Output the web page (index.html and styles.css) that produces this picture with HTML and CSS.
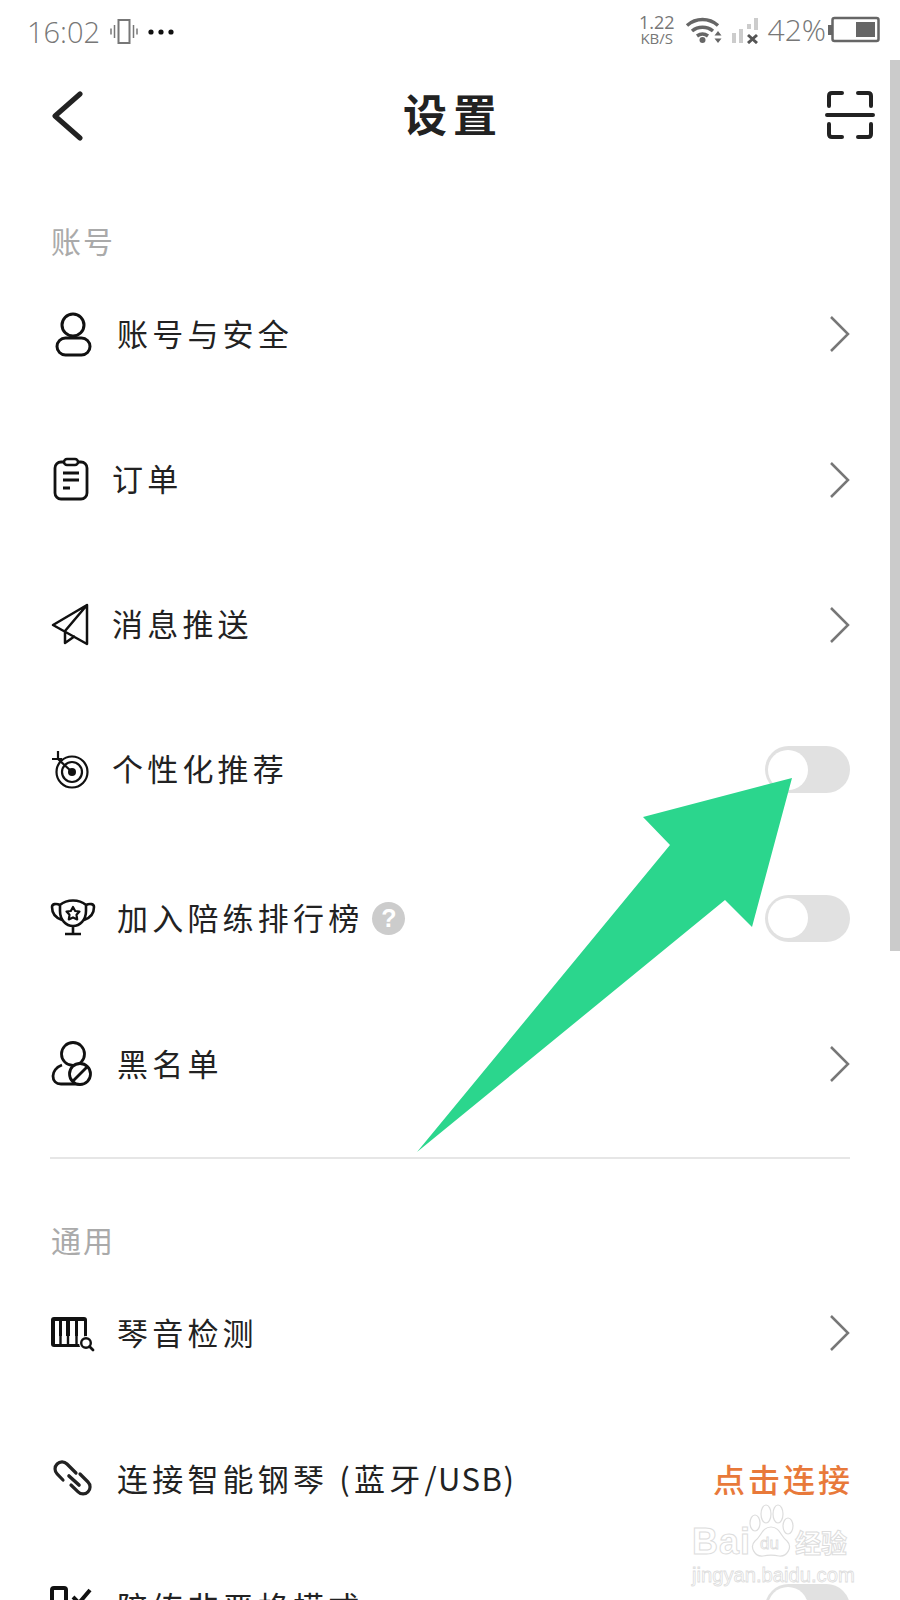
FILE: index.html
```html
<!DOCTYPE html>
<html lang="zh-CN">

<head>
  <meta charset="UTF-8">
  <title>设置</title>
  <link rel="stylesheet" href="styles.css">
</head>

<body>
  <div class="screen">
    <div class="status">
      <div class="status__left">
        <span class="status__time">16:02</span>
        <svg class="status__vibrate" viewBox="0 0 28 28" width="28" height="28">
          <rect x="8.500" y="2" width="11" height="23" fill="none" stroke="#777" stroke-width="2" />
          <path d="M4.500 7v13M23.500 7v13M1 10.500v6M27 10.500v6" stroke="#777" stroke-width="1.500" />
        </svg>
        <svg viewBox="0 0 26 6" width="26" height="6">
          <circle cx="3" cy="3" r="2.600" fill="#111" />
          <circle cx="13" cy="3" r="2.600" fill="#111" />
          <circle cx="23" cy="3" r="2.600" fill="#111" />
        </svg>
      </div>
      <div class="status__right">
        <div class="status__speed">
          <span>1.22</span>
          <span class="status__unit">KB/S</span>
        </div>
        <svg class="status__wifi" viewBox="0 0 38 28" width="38" height="28">
          <path d="M2 9.500C11 1.500 24 1.500 33 9.500M7 15c6-5 15-5 21 0M12 20c3.500-2.500 7.500-2.500 11 0" fill="none" stroke="#666" stroke-width="3.500" />
          <circle cx="17.500" cy="24" r="3" fill="#666" />
          <path d="M33 15l3.500 4.500h-7zM33 27l3.500-4.500h-7z" fill="#666" />
        </svg>
        <svg class="status__signal" viewBox="0 0 30 28" width="30" height="28">
          <rect x="2" y="17" width="4" height="10" fill="#ccc" />
          <rect x="9" y="13" width="4" height="14" fill="#ccc" />
          <rect x="17" y="8" width="4" height="5" fill="#ccc" />
          <rect x="24" y="2" width="4" height="12" fill="#ccc" />
          <path d="M18 19l9 8M27 19l-9 8" stroke="#555" stroke-width="3" />
        </svg>
        <span class="status__battery-text">42%</span>
        <svg class="status__battery" viewBox="0 0 52 28" width="52" height="28">
          <rect x="0" y="9" width="4" height="10" fill="#666" />
          <rect x="4.500" y="2" width="46" height="23" rx="2" fill="#fff" stroke="#666" stroke-width="2.500" />
          <rect x="28" y="6" width="19" height="15" fill="#666" />
        </svg>
      </div>
    </div>

    <header class="header">
      <svg class="header__back" viewBox="0 0 40 50" width="40" height="50">
        <path d="M33 3L8 25l25 22" fill="none" stroke="#222" stroke-width="5" stroke-linecap="round" stroke-linejoin="round" />
      </svg>
      <h1 class="header__title">设置</h1>
      <svg class="header__scan" viewBox="0 0 50 50" width="50" height="50">
        <path d="M4 16V6q0-3 3-3h10M33 3h10q3 0 3 3v10M2 25h46M4 34v10q0 3 3 3h10M33 47h10q3 0 3-3V34" fill="none" stroke="#222" stroke-width="4" stroke-linecap="round" />
      </svg>
    </header>

    <section class="section section--first">
      <h2 class="section__label">账号</h2>

      <div class="row">
        <svg class="row__icon" viewBox="0 0 50 50">
          <circle cx="25" cy="16" r="11" fill="none" stroke="#111" stroke-width="3" />
          <rect x="9" y="29" width="33" height="17" rx="8.500" fill="none" stroke="#111" stroke-width="3" />
        </svg>
        <span class="row__text">账号与安全</span>
        <svg class="row__arrow" viewBox="0 0 22 40" width="22" height="40">
          <path d="M3 3l17 17L3 37" fill="none" stroke="#777" stroke-width="2.500" />
        </svg>
      </div>

      <div class="row row--tight">
        <svg class="row__icon" viewBox="0 0 50 50">
          <rect x="7" y="7" width="32" height="37" rx="6" fill="none" stroke="#111" stroke-width="2.800" />
          <rect x="16" y="4" width="14" height="6" rx="3" fill="#fff" stroke="#111" stroke-width="2.500" />
          <path d="M15 18h16M15 25h16M15 33h7" stroke="#111" stroke-width="2.800" />
        </svg>
        <span class="row__text">订单</span>
        <svg class="row__arrow" viewBox="0 0 22 40" width="22" height="40">
          <path d="M3 3l17 17L3 37" fill="none" stroke="#777" stroke-width="2.500" />
        </svg>
      </div>

      <div class="row row--tight">
        <svg class="row__icon" viewBox="0 0 50 50">
          <path d="M39 5L5 25l34 19zM39 5L17 31v12l10-7" fill="none" stroke="#111" stroke-width="2.500" stroke-linejoin="round" />
        </svg>
        <span class="row__text">消息推送</span>
        <svg class="row__arrow" viewBox="0 0 22 40" width="22" height="40">
          <path d="M3 3l17 17L3 37" fill="none" stroke="#777" stroke-width="2.500" />
        </svg>
      </div>

      <div class="row row--tight">
        <svg class="row__icon" viewBox="0 0 50 50">
          <circle cx="24" cy="27" r="15.500" fill="none" stroke="#111" stroke-width="2.200" />
          <circle cx="24" cy="27" r="10" fill="none" stroke="#111" stroke-width="2.200" />
          <circle cx="24" cy="27" r="4" fill="#111" />
          <path d="M24 27L10 14M4 14h10M10 6v9" fill="none" stroke="#111" stroke-width="2.200" />
        </svg>
        <span class="row__text">个性化推荐</span>
        <div class="toggle"><div class="toggle__knob"></div></div>
      </div>

      <div class="row row--lower">
        <svg class="row__icon" viewBox="0 0 50 50">
          <path d="M12 12c7-6 19-6 26 0v6c0 9-6 15-13 15s-13-6-13-15zM12 12C8 10 4 11 4 14c0 7 4 11 10 13M38 12c4-2 8-1 8 2 0 7-4 11-10 13M25 33v8M17 41h16" fill="none" stroke="#111" stroke-width="2.600" stroke-linejoin="round" />
          <path d="M25 14l2.200 4 4.300.6-3 3.200.7 4.600-4.200-2-4.200 2 .7-4.600-3-3.200 4.300-.6z" fill="none" stroke="#111" stroke-width="2.200" stroke-linejoin="round" />
        </svg>
        <span class="row__text">加入陪练排行榜</span>
        <span class="help">?</span>
        <div class="toggle"><div class="toggle__knob"></div></div>
      </div>

      <div class="row">
        <svg class="row__icon" viewBox="0 0 50 50">
          <circle cx="25" cy="15" r="11.500" fill="none" stroke="#111" stroke-width="2.800" />
          <path d="M14 26c-6 2-9 7-9 11 0 5 3 8 8 8h19" fill="none" stroke="#111" stroke-width="2.800" />
          <circle cx="32" cy="35" r="10.500" fill="#fff" stroke="#111" stroke-width="2.800" />
          <path d="M25 42l14-14" stroke="#111" stroke-width="2.800" />
        </svg>
        <span class="row__text">黑名单</span>
        <svg class="row__arrow" viewBox="0 0 22 40" width="22" height="40">
          <path d="M3 3l17 17L3 37" fill="none" stroke="#777" stroke-width="2.500" />
        </svg>
      </div>
    </section>

    <div class="divider"></div>

    <section class="section">
      <h2 class="section__label">通用</h2>

      <div class="row">
        <svg class="row__icon" viewBox="0 0 50 50">
          <rect x="3" y="9" width="36" height="30" rx="3" fill="#111" />
          <path d="M7 13h4v15h3V13h4v15h4V13h5v15h3V13h6v23H7z" fill="#fff" />
          <path d="M12.500 28v8M20 28v8M28.500 28v8" stroke="#111" stroke-width="2.400" />
          <circle cx="38" cy="35" r="7" fill="#fff" />
          <circle cx="38" cy="35" r="4.800" fill="none" stroke="#111" stroke-width="2.400" />
          <path d="M41.500 38.500L45 42" stroke="#111" stroke-width="2.800" stroke-linecap="round" />
        </svg>
        <span class="row__text">琴音检测</span>
        <svg class="row__arrow" viewBox="0 0 22 40" width="22" height="40">
          <path d="M3 3l17 17L3 37" fill="none" stroke="#777" stroke-width="2.500" />
        </svg>
      </div>

      <div class="row">
        <svg class="row__icon" viewBox="0 0 50 50">
          <path d="M28 19l-9-9a7 7 0 0 0-9.900 9.900L15 26M32 20l8 8a7 7 0 0 1-9.900 9.900L23 31" fill="none" stroke="#222" stroke-width="3.200" stroke-linecap="round" />
          <path d="M21 22l10 9" stroke="#222" stroke-width="3.600" stroke-linecap="round" />
        </svg>
        <span class="row__text">连接智能钢琴 (蓝牙<span class="row__latin">/USB)</span></span>
        <span class="row__action">点击连接</span>
      </div>

      <div class="row row--short">
        <svg class="row__icon" viewBox="0 0 50 50">
          <rect x="4" y="6" width="14" height="28" rx="2" fill="none" stroke="#111" stroke-width="4" />
          <path d="M25 15l6 6 11-13" fill="none" stroke="#111" stroke-width="4" />
        </svg>
        <span class="row__text">陪练非严格模式</span>
        <div class="toggle"><div class="toggle__knob"></div></div>
      </div>
    </section>

    <div class="scrollbar"></div>

    <svg class="pointer" viewBox="0 0 400 400" width="400" height="400">
      <polygon points="392,8 243,47 270,75 17,382 325,130 352,157" fill="#2bd68d" />
    </svg>

    <div class="watermark">
      <div class="watermark__line">
        <span class="watermark__brand">Bai</span>
        <svg class="watermark__paw" viewBox="0 0 48 56" width="48" height="56">
          <g fill="none" stroke="#ddd" stroke-width="1.200">
            <ellipse cx="8" cy="19" rx="5" ry="8" />
            <ellipse cx="19" cy="10" rx="5" ry="9" />
            <ellipse cx="31" cy="10" rx="5" ry="9" />
            <ellipse cx="41" cy="22" rx="5" ry="8" />
            <path d="M24 23c9 0 10 10 16 14 6 6 0 16-8 15-5-1-11-1-16 0C8 53 2 43 8 37c6-4 7-14 16-14z" />
          </g>
          <text x="13" y="45" class="watermark__du">du</text>
        </svg>
        <span class="watermark__cn">经验</span>
      </div>
      <div class="watermark__url">jingyan.baidu.com</div>
    </div>
  </div>
</body>

</html>
```

FILE: styles.css
```css
* {
  margin: 0;
  padding: 0;
  box-sizing: border-box;
}

body {
  background-color: #fff;
  font-family: "Noto Sans CJK SC", "Noto Sans", sans-serif;
  color: #222;
}

.screen {
  position: relative;
  width: 900px;
  height: 1600px;
  overflow: hidden;
  background-color: #fff;
}

/* status bar */
.status {
  display: flex;
  justify-content: space-between;
  align-items: center;
  height: 60px;
  padding: 3px 20px 0 27px;
  color: #777;
}

.status__left {
  display: flex;
  align-items: center;
  gap: 10px;
}

.status__time {
  font-family: "Open Sans", sans-serif;
  font-weight: 300;
  font-size: 29px;
  line-height: 1;
}

.status__right {
  display: flex;
  align-items: center;
  margin-top: -3px;
}

.status__speed {
  display: flex;
  flex-direction: column;
  align-items: center;
  font-family: "Open Sans", sans-serif;
  font-size: 18px;
  line-height: 16px;
  margin-right: 10px;
}

.status__unit {
  font-size: 15px;
}

.status__signal {
  margin-left: 7px;
}

.status__battery-text {
  font-family: "Open Sans", sans-serif;
  font-weight: 300;
  font-size: 30px;
  line-height: 1;
  margin-left: 8px;
}

.status__battery {
  margin-left: 2px;
}

/* header */
.header {
  display: grid;
  grid-template-columns: 1fr auto 1fr;
  align-items: center;
  height: 112px;
  padding: 0 25px;
}

.header__back {
  margin-left: 22px;
}

.header__title {
  font-size: 44px;
  font-weight: 700;
  letter-spacing: 6px;
  margin-right: -6px;
  margin-bottom: 6px;
  line-height: 1;
  color: #222;
}

.header__scan {
  justify-self: end;
  margin-bottom: 2px;
}

/* settings list */
.section {
  padding: 60px 50px 0 48px;
}

.section--first {
  padding-top: 48px;
}

.section__label {
  font-size: 30px;
  font-weight: 400;
  letter-spacing: 2px;
  line-height: 40px;
  height: 41px;
  margin-left: 3px;
  color: #aaa;
}

.row {
  display: flex;
  align-items: center;
  height: 146px;
}

.row--tight {
  height: 145px;
}

.row--lower {
  margin-top: 3px;
}

.row--short {
  height: 110px;
}

.row__icon {
  flex: none;
  width: 50px;
  height: 50px;
  margin-right: 19px;
}

.row--tight .row__icon {
  margin-right: 14px;
}

.row__text {
  font-size: 31px;
  letter-spacing: 4.200px;
  line-height: 40px;
  margin-bottom: 3px;
  white-space: nowrap;
}

.row__latin {
  letter-spacing: 1.500px;
}

.row__arrow {
  flex: none;
  margin-left: auto;
}

.row__action {
  margin-left: auto;
  margin-right: -3px;
  margin-bottom: 3px;
  font-size: 32px;
  font-weight: 500;
  letter-spacing: 3px;
  color: #e8793a;
}

.help {
  display: flex;
  align-items: center;
  justify-content: center;
  width: 33px;
  height: 33px;
  margin-left: 9px;
  border-radius: 50%;
  background-color: #ccc;
  color: #fff;
  font-family: "Liberation Sans", sans-serif;
  font-weight: 700;
  font-size: 25px;
}

.toggle {
  display: flex;
  align-items: center;
  flex: none;
  width: 85px;
  height: 47px;
  margin-left: auto;
  padding: 0 3px;
  border-radius: 24px;
  background-color: #e1e1e1;
}

.toggle__knob {
  width: 40px;
  height: 40px;
  border-radius: 50%;
  background-color: #fff;
}

.divider {
  height: 2px;
  margin: 20px 50px 0;
  background-color: #e6e6e6;
}

/* things lying over the page */
.scrollbar {
  position: absolute;
  top: 60px;
  right: 0;
  width: 10px;
  height: 891px;
  background-color: #cbcbcb;
}

.pointer {
  position: absolute;
  top: 770px;
  left: 400px;
}

.watermark {
  position: absolute;
  top: 1502px;
  left: 692px;
  width: 165px;
}

.watermark__line {
  display: flex;
  align-items: flex-end;
  height: 58px;
}

.watermark__brand {
  font-family: "Liberation Sans", sans-serif;
  font-weight: 700;
  font-size: 36px;
  line-height: 36px;
  letter-spacing: 1px;
  color: #fff;
  -webkit-text-stroke: 1px #ddd;
}

.watermark__paw {
  flex: none;
  margin-left: -4px;
}

.watermark__du {
  font-family: "Liberation Sans", sans-serif;
  font-size: 17px;
  fill: #fff;
  stroke: #ddd;
  stroke-width: 0.800;
}

.watermark__cn {
  font-size: 26px;
  font-weight: 700;
  line-height: 36px;
  color: #fff;
  -webkit-text-stroke: 1px #ddd;
  white-space: nowrap;
}

.watermark__url {
  font-family: "Liberation Sans", sans-serif;
  font-size: 20.200px;
  line-height: 24px;
  margin-top: 3px;
  color: #fff;
  -webkit-text-stroke: 0.800px #ddd;
  white-space: nowrap;
}
```
